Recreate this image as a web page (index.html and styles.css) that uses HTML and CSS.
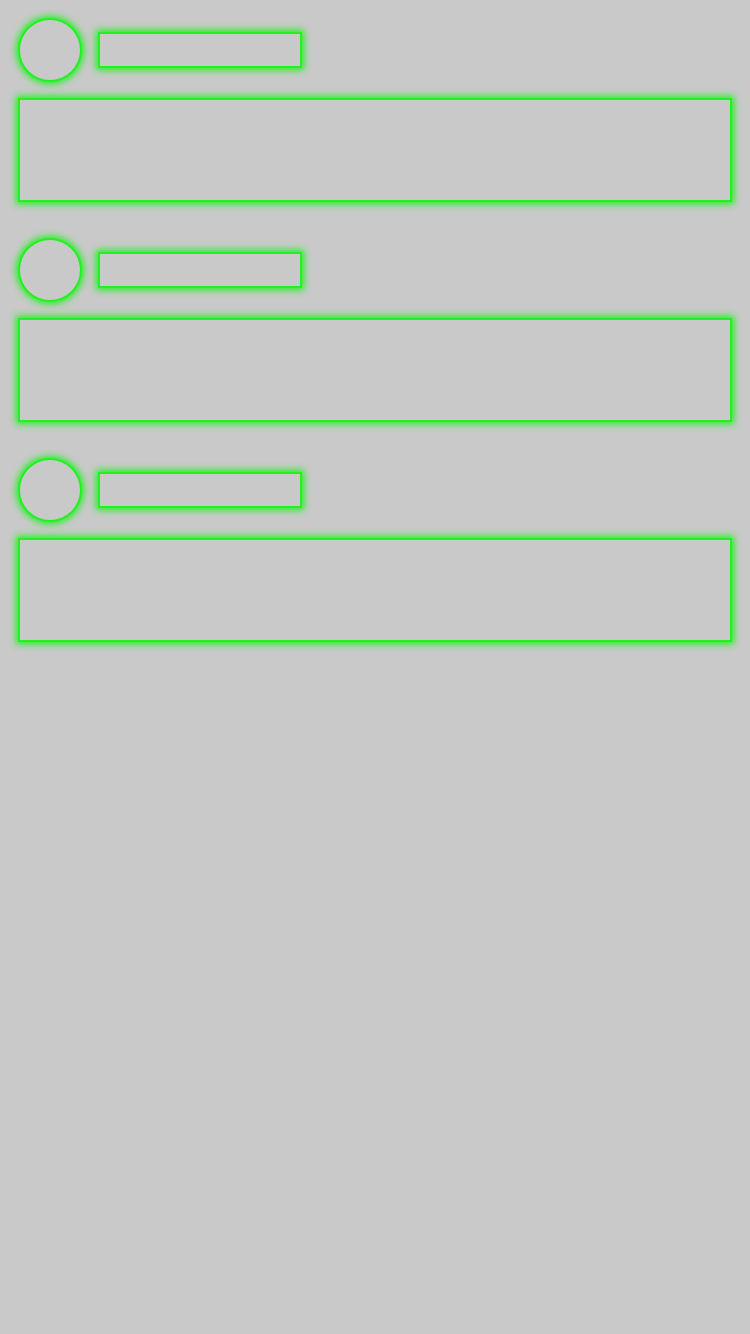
FILE: index.html
```html
<!DOCTYPE html>
<html>
<head>
<meta charset="utf-8">
<link rel="stylesheet" href="styles.css">
</head>
<body>
<div class="list">
  <div class="item">
    <div class="head"><div class="avatar"></div><div class="title"></div></div>
    <div class="block"></div>
  </div>
  <div class="item">
    <div class="head"><div class="avatar"></div><div class="title"></div></div>
    <div class="block"></div>
  </div>
  <div class="item">
    <div class="head"><div class="avatar"></div><div class="title"></div></div>
    <div class="block"></div>
  </div>
</div>
</body>
</html>
```
FILE: styles.css
```css
html, body {
  margin: 0;
  padding: 0;
  background: #c9c9c9;
  height: 100%;
}
.list {
  display: flex;
  flex-direction: column;
  gap: 40px;
  padding: 20px;
}
.item {
  display: flex;
  flex-direction: column;
  gap: 20px;
}
.head {
  display: flex;
  align-items: center;
  gap: 20px;
}
.avatar, .title, .block {
  box-shadow: 0 0 0 2px #1ff21f, 0 0 7px 4px #1ff21f;
  background: #c9c9c9;
}
.avatar {
  width: 60px;
  height: 60px;
  border-radius: 50%;
}
.title {
  width: 200px;
  height: 32px;
}
.block {
  height: 100px;
}
```
